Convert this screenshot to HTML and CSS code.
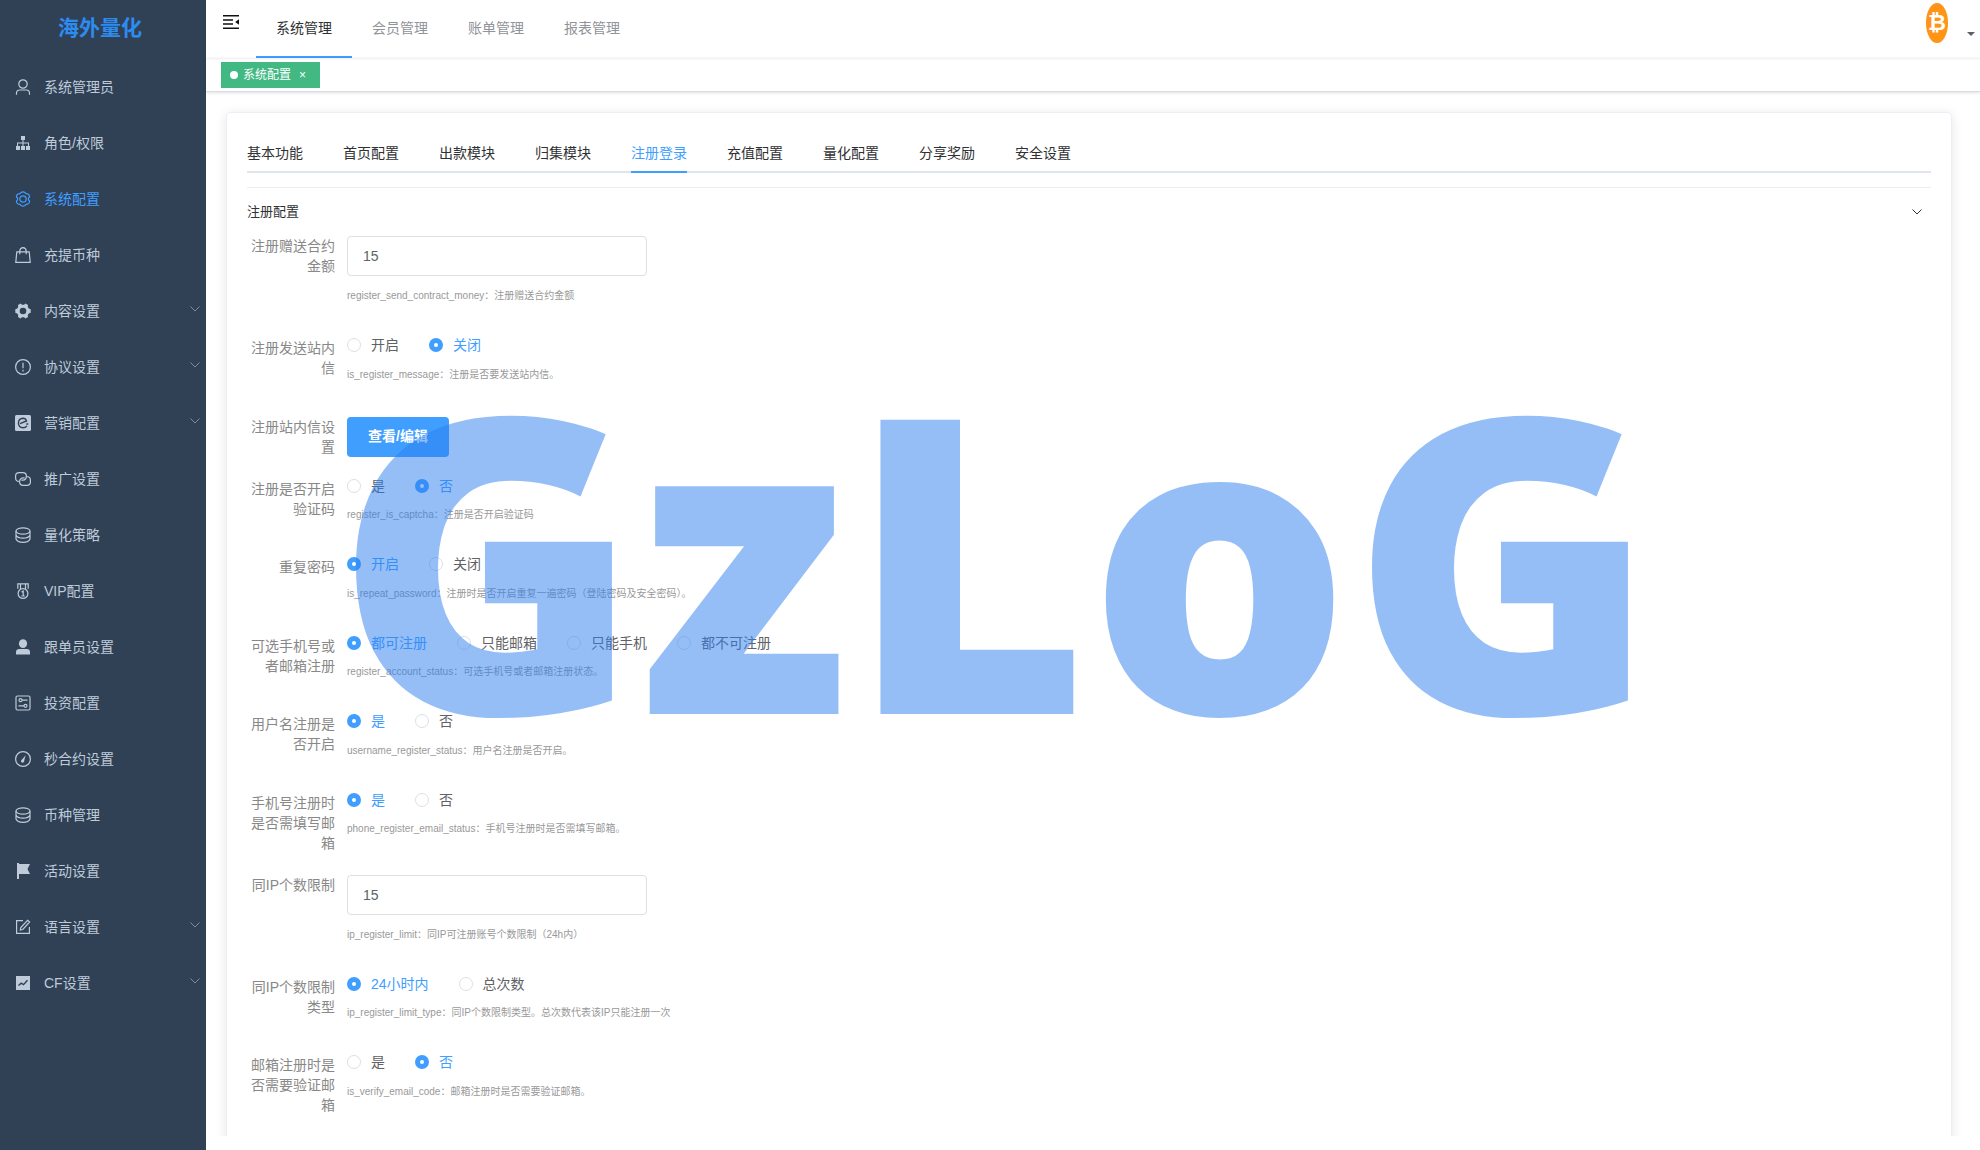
FILE: index.html
```html
<!DOCTYPE html>
<html lang="zh-CN">
<head>
  <meta charset="UTF-8">
  <meta name="viewport" content="width=device-width, initial-scale=1.0">
  <title>海外量化</title>
  <link rel="stylesheet" href="styles.css">
</head>
<body>

<div class="app">

  <!-- Sidebar -->
  <aside class="sidebar">
    <h1 class="logo">海外量化</h1>
    <nav class="menu">
      <a href="#" class="menu-item">
        <svg class="icon" viewBox="0 0 16 16"><circle cx="8" cy="5" r="4.2"/><path d="M1.5 15.8v-1.600q0-3.200 3.200-3.200h6.600q3.200 0 3.200 3.200v1.600"/></svg>
        <span>系统管理员</span>
      </a>
      <a href="#" class="menu-item">
        <svg class="icon fill" viewBox="0 0 16 16"><path d="M6 1h4v4H8.500v2.500H14V11h1v4h-4v-4h2V8.500H8.500V11H10v4H6v-4h1.500V8.500H3V11h2v4H1v-4h1V7.500h5.500V5H6z"/></svg>
        <span>角色/权限</span>
      </a>
      <a href="#" class="menu-item active">
        <svg class="icon" viewBox="0 0 16 16"><path d="M6 1.500Q8 .2 10 1.500q.7 1.600 2.600 1.300 2 .8 2 3-1.300 1.200-1.300 2.200t1.300 2.200q0 2.200-2 3-1.900-.3-2.600 1.300-2 1.300-4 0-.7-1.600-2.600-1.300-2-.8-2-3Q2.700 9 2.700 8T1.400 5.800q0-2.200 2-3 1.900.3 2.600-1.300z"/><circle cx="8" cy="8" r="3.200"/></svg>
        <span>系统配置</span>
      </a>
      <a href="#" class="menu-item">
        <svg class="icon" viewBox="0 0 16 16"><path d="M1.800 4.800h12.400l1 10.500H.8zM4.800 7.200V4Q5 1 8 .7q3 .3 3.200 3.300v3.200"/></svg>
        <span>充提币种</span>
      </a>
      <a href="#" class="menu-item">
        <svg class="icon fill" viewBox="0 0 16 16"><path fill-rule="evenodd" d="M5.500.5 7 1.700h2L10.500.5l2.500 1.500-.2 2 1 1.600 1.900.7v3.400l-1.900.7-1 1.600.2 2-2.500 1.500L9 14.300H7l-1.500 1.200L3 14l.2-2-1-1.600-1.900-.7V6.300l1.900-.7 1-1.600L3 2zM8 4.700a3.300 3.300 0 1 0 0 6.600 3.300 3.300 0 0 0 0-6.600z"/></svg>
        <span>内容设置</span>
        <svg class="arrow" viewBox="0 0 10 6"><path d="M.5.5 5 5 9.500.5"/></svg>
      </a>
      <a href="#" class="menu-item">
        <svg class="icon" viewBox="0 0 16 16"><circle cx="8" cy="8" r="7.400"/><path d="M8 3.800v5.500M8 10.800v1.600"/></svg>
        <span>协议设置</span>
        <svg class="arrow" viewBox="0 0 10 6"><path d="M.5.5 5 5 9.500.5"/></svg>
      </a>
      <a href="#" class="menu-item">
        <svg class="icon" viewBox="0 0 16 16"><rect class="solid" width="16" height="16" rx="1.500"/><path class="cut" d="M5 8.700 11.500 6Q10.600 3.300 8 3.300 3.600 3.600 3.400 8q.2 4.600 4.600 4.800 2.500 0 4-1.900M11.300 9h2"/></svg>
        <span>营销配置</span>
        <svg class="arrow" viewBox="0 0 10 6"><path d="M.5.5 5 5 9.500.5"/></svg>
      </a>
      <a href="#" class="menu-item">
        <svg class="icon" viewBox="0 0 16 16"><path d="M4.500 10.500Q.6 10.500.6 7V5Q.6 1.600 4.200 1.600h3.600q3.600 0 3.600 3.600T8 9.200H6.300M11.500 5.500q3.900 0 3.900 3.500v2q0 3.400-3.600 3.400H8.200q-3.600 0-3.600-3.600T8 6.800h1.700"/></svg>
        <span>推广设置</span>
      </a>
      <a href="#" class="menu-item">
        <svg class="icon" viewBox="0 0 16 16"><ellipse cx="8" cy="4" rx="7" ry="3.200"/><path d="M1 4v8q1.200 3.300 7 3.300t7-3.300V4M1 8q1.200 3.200 7 3.200T15 8"/></svg>
        <span>量化策略</span>
      </a>
      <a href="#" class="menu-item">
        <svg class="icon" viewBox="0 0 16 16"><circle cx="8" cy="10.500" r="4.900"/><path d="M2.800 5.800V.8h10.400v5M5.500 1v5M10.500 1v5M6.500 9 8.200 8v5M6.400 13h3.400"/></svg>
        <span>VIP配置</span>
      </a>
      <a href="#" class="menu-item">
        <svg class="icon fill" viewBox="0 0 16 16"><ellipse cx="8" cy="4.600" rx="4.100" ry="4.400"/><path d="M1 15.500V13q0-3 3.500-3h7q3.500 0 3.500 3v2.500z"/></svg>
        <span>跟单员设置</span>
      </a>
      <a href="#" class="menu-item">
        <svg class="icon" viewBox="0 0 16 16"><rect x="1" y="1" width="14" height="14" rx="1.500"/><circle cx="5.500" cy="5.200" r="1.500"/><circle cx="10.500" cy="10.800" r="1.500"/><path d="M7 5.200h5.500M3.500 10.800H9"/></svg>
        <span>投资配置</span>
      </a>
      <a href="#" class="menu-item">
        <svg class="icon" viewBox="0 0 16 16"><circle cx="8" cy="8" r="7.400"/><path class="solid" d="M10.700 4.200 9.200 9.600A1.600 1.600 0 1 1 7 8.600z"/></svg>
        <span>秒合约设置</span>
      </a>
      <a href="#" class="menu-item">
        <svg class="icon" viewBox="0 0 16 16"><ellipse cx="8" cy="4" rx="7" ry="3.200"/><path d="M1 4v8q1.200 3.300 7 3.300t7-3.300V4M1 8q1.200 3.200 7 3.200T15 8"/></svg>
        <span>币种管理</span>
      </a>
      <a href="#" class="menu-item">
        <svg class="icon fill" viewBox="0 0 16 16"><path d="M2 0h2v1h11l-2.500 5L15 11H4v5H2z"/></svg>
        <span>活动设置</span>
      </a>
      <a href="#" class="menu-item">
        <svg class="icon" viewBox="0 0 16 16"><path d="M8 1.700H1.600v12.700h12.800V8M12.600 1.300l2 1.700-6.800 7.500-2.500.5.500-2.500z"/></svg>
        <span>语言设置</span>
        <svg class="arrow" viewBox="0 0 10 6"><path d="M.5.5 5 5 9.500.5"/></svg>
      </a>
      <a href="#" class="menu-item">
        <svg class="icon" viewBox="0 0 16 16"><rect class="solid" x="1" y="1" width="14" height="14"/><path class="cut" d="m3.500 10.500 2.700-2.300 2.300 1.500 4-4.500"/></svg>
        <span>CF设置</span>
        <svg class="arrow" viewBox="0 0 10 6"><path d="M.5.5 5 5 9.500.5"/></svg>
      </a>
    </nav>
  </aside>

  <!-- Main -->
  <div class="main">
    <header class="navbar">
      <button class="hamburger" aria-label="菜单">
        <svg viewBox="0 0 16 14"><path class="bars" d="M0 .8h16M0 4.900h10M0 9h10M0 13.200h16"/><path d="m12.200 7 3.800-2.700v5.400z"/></svg>
      </button>
      <nav class="top-menu">
        <a href="#" class="active">系统管理</a>
        <a href="#">会员管理</a>
        <a href="#">账单管理</a>
        <a href="#">报表管理</a>
      </nav>
      <button class="user">
        <span class="avatar">₿</span>
        <span class="caret"></span>
      </button>
    </header>

    <div class="tags-view">
      <a href="#" class="tag">系统配置<span class="tag-close">×</span></a>
    </div>

    <main class="content">
      <section class="card">
        <nav class="tabs">
          <a href="#">基本功能</a>
          <a href="#">首页配置</a>
          <a href="#">出款模块</a>
          <a href="#">归集模块</a>
          <a href="#" class="active">注册登录</a>
          <a href="#">充值配置</a>
          <a href="#">量化配置</a>
          <a href="#">分享奖励</a>
          <a href="#">安全设置</a>
        </nav>

        <button class="collapse-header">
          <span>注册配置</span>
          <svg viewBox="0 0 10 6"><path d="M.5.5 5 5 9.500.5"/></svg>
        </button>

        <form class="form">
          <div class="form-item">
            <label class="label" for="sendMoney">注册赠送合约金额</label>
            <div>
              <input class="text-input" type="text" id="sendMoney" value="15">
              <p class="tip">register_send_contract_money：注册赠送合约金额</p>
            </div>
          </div>

          <div class="form-item" role="radiogroup" aria-labelledby="l-message">
            <span class="label" id="l-message">注册发送站内信</span>
            <div>
              <div class="radios">
                <label><input type="radio" name="message"><span>开启</span></label>
                <label><input type="radio" name="message" checked><span>关闭</span></label>
              </div>
              <p class="tip">is_register_message：注册是否要发送站内信。</p>
            </div>
          </div>

          <div class="form-item">
            <label class="label" for="editMessage">注册站内信设置</label>
            <div>
              <button type="button" class="btn" id="editMessage">查看/编辑</button>
            </div>
          </div>

          <div class="form-item" role="radiogroup" aria-labelledby="l-captcha">
            <span class="label" id="l-captcha">注册是否开启验证码</span>
            <div>
              <div class="radios">
                <label><input type="radio" name="captcha"><span>是</span></label>
                <label><input type="radio" name="captcha" checked><span>否</span></label>
              </div>
              <p class="tip">register_is_captcha：注册是否开启验证码</p>
            </div>
          </div>

          <div class="form-item" role="radiogroup" aria-labelledby="l-repeat">
            <span class="label" id="l-repeat">重复密码</span>
            <div>
              <div class="radios">
                <label><input type="radio" name="repeat" checked><span>开启</span></label>
                <label><input type="radio" name="repeat"><span>关闭</span></label>
              </div>
              <p class="tip">is_repeat_password：注册时是否开启重复一遍密码（登陆密码及安全密码）。</p>
            </div>
          </div>

          <div class="form-item" role="radiogroup" aria-labelledby="l-account">
            <span class="label" id="l-account">可选手机号或者邮箱注册</span>
            <div>
              <div class="radios">
                <label><input type="radio" name="account" checked><span>都可注册</span></label>
                <label><input type="radio" name="account"><span>只能邮箱</span></label>
                <label><input type="radio" name="account"><span>只能手机</span></label>
                <label><input type="radio" name="account"><span>都不可注册</span></label>
              </div>
              <p class="tip">register_account_status：可选手机号或者邮箱注册状态。</p>
            </div>
          </div>

          <div class="form-item" role="radiogroup" aria-labelledby="l-username">
            <span class="label" id="l-username">用户名注册是否开启</span>
            <div>
              <div class="radios">
                <label><input type="radio" name="username" checked><span>是</span></label>
                <label><input type="radio" name="username"><span>否</span></label>
              </div>
              <p class="tip">username_register_status：用户名注册是否开启。</p>
            </div>
          </div>

          <div class="form-item" role="radiogroup" aria-labelledby="l-phone">
            <span class="label" id="l-phone">手机号注册时是否需填写邮箱</span>
            <div>
              <div class="radios">
                <label><input type="radio" name="phone" checked><span>是</span></label>
                <label><input type="radio" name="phone"><span>否</span></label>
              </div>
              <p class="tip">phone_register_email_status：手机号注册时是否需填写邮箱。</p>
            </div>
          </div>

          <div class="form-item">
            <label class="label" for="ipLimit">同IP个数限制</label>
            <div>
              <input class="text-input" type="text" id="ipLimit" value="15">
              <p class="tip">ip_register_limit：同IP可注册账号个数限制（24h内）</p>
            </div>
          </div>

          <div class="form-item" role="radiogroup" aria-labelledby="l-iptype">
            <span class="label" id="l-iptype">同IP个数限制类型</span>
            <div>
              <div class="radios">
                <label><input type="radio" name="iptype" checked><span>24小时内</span></label>
                <label><input type="radio" name="iptype"><span>总次数</span></label>
              </div>
              <p class="tip">ip_register_limit_type：同IP个数限制类型。总次数代表该IP只能注册一次</p>
            </div>
          </div>

          <div class="form-item" role="radiogroup" aria-labelledby="l-email">
            <span class="label" id="l-email">邮箱注册时是否需要验证邮箱</span>
            <div>
              <div class="radios">
                <label><input type="radio" name="email"><span>是</span></label>
                <label><input type="radio" name="email" checked><span>否</span></label>
              </div>
              <p class="tip">is_verify_email_code：邮箱注册时是否需要验证邮箱。</p>
            </div>
          </div>
        </form>
      </section>
    </main>
  </div>
</div>

<!-- Watermark -->
<div class="watermark">GzLoG</div>

</body>
</html>
```
FILE: styles.css
```css
/* Global */
* {
  box-sizing: border-box;
}

body {
  margin: 0;
  font-family: "Liberation Sans", "Noto Sans CJK SC", sans-serif;
  font-size: 14px;
  line-height: 1.15;
  color: #303133;
  background: #fff;
  overflow: hidden;
}

a {
  color: inherit;
  text-decoration: none;
}

button,
input {
  font-family: inherit;
  font-size: inherit;
  line-height: inherit;
}

button {
  border: none;
  background: none;
  padding: 0;
  cursor: pointer;
}

svg {
  fill: none;
  stroke: currentColor;
}

.app {
  display: flex;
  height: 100vh;
}

/* Sidebar */
.sidebar {
  width: 206px;
  flex-shrink: 0;
  background: #304156;
  overflow: hidden;
}

.logo {
  margin: 0;
  padding: 0 6px 3px 0;
  font-size: 21px;
  line-height: 56px;
  text-align: center;
  color: #2d8cf0;
}

.menu-item {
  display: flex;
  align-items: center;
  gap: 13px;
  height: 56px;
  padding: 0 6px 0 15px;
  color: #bfcbd9;
}

.menu-item.active {
  color: #409eff;
}

.icon {
  width: 16px;
  height: 16px;
  stroke-width: 1.2;
}

.icon.fill,
.icon .solid {
  fill: currentColor;
  stroke: none;
}

.icon .cut {
  stroke: #304156;
  stroke-width: 1.4;
}

.arrow {
  width: 10px;
  height: 6px;
  margin-left: auto;
  margin-bottom: 5px;
  color: #808b98;
}

/* Navbar */
.main {
  flex: 1;
  min-width: 0;
  display: flex;
  flex-direction: column;
  padding-bottom: 14px;
}

.navbar {
  display: flex;
  align-items: flex-start;
  height: 58px;
  flex-shrink: 0;
  padding: 0 5px 0 17px;
  box-shadow: 0 1px 2px rgba(0, 21, 41, 0.08);
}

.hamburger {
  margin: 15px 17px 0 0;
}

.hamburger svg {
  display: block;
  width: 16px;
  height: 14px;
  fill: #111;
  stroke: none;
}

.hamburger .bars {
  stroke: #111;
  stroke-width: 1.5;
}

.top-menu {
  display: flex;
}

.top-menu a {
  height: 58px;
  padding: 0 20px;
  line-height: 56px;
  color: #909399;
}

.top-menu a.active {
  color: #303133;
  border-bottom: 2px solid #409eff;
}

.user {
  display: flex;
  align-items: center;
  gap: 19px;
  margin: 3px 0 0 auto;
}

.avatar {
  width: 22px;
  height: 40px;
  border-radius: 50%;
  background: #ff9416;
  color: #fff;
  font: bold 22px/40px "DejaVu Sans Condensed", "DejaVu Sans", sans-serif;
  text-align: center;
}

.caret {
  margin-top: 26px;
  border: 4px solid transparent;
  border-top-color: #5a5e66;
}

/* Tags */
.tags-view {
  height: 34px;
  flex-shrink: 0;
  padding: 4px 15px;
  border-bottom: 1px solid #d8dce5;
  box-shadow: 0 1px 3px rgba(0, 0, 0, 0.12);
}

.tag {
  display: inline-flex;
  align-items: center;
  height: 26px;
  padding: 0 14px 0 9px;
  background: #42b983;
  color: #fff;
  font-size: 12px;
  line-height: 16px;
}

.tag::before {
  content: "";
  width: 8px;
  height: 8px;
  margin-right: 5px;
  border-radius: 50%;
  background: #fff;
}

.tag-close {
  margin-left: 8px;
}

/* Content */
.content {
  flex: 1;
  min-height: 0;
  padding: 20px 28px 0 20px;
  overflow: hidden;
}

.card {
  padding: 20px;
  border: 1px solid #ebeef5;
  border-radius: 4px;
  box-shadow: 0 2px 12px rgba(0, 0, 0, 0.1);
}

.tabs {
  display: flex;
  gap: 40px;
  margin-bottom: 14px;
  box-shadow: inset 0 -2px #dfe4ed;
}

.tabs a {
  height: 40px;
  line-height: 40px;
}

.tabs a.active {
  color: #409eff;
  border-bottom: 2px solid #409eff;
}

.collapse-header {
  display: flex;
  align-items: center;
  justify-content: space-between;
  width: 100%;
  height: 49px;
  padding-right: 9px;
  border-top: 1px solid #ebeef5;
  font-size: 13px;
  color: #303133;
}

.collapse-header svg {
  width: 10px;
  height: 6px;
}

/* Form */
.form-item {
  display: flex;
  align-items: flex-start;
  margin-bottom: 22px;
}

.label {
  width: 100px;
  padding-right: 12px;
  line-height: 20px;
  text-align: right;
  color: #888;
}

.text-input {
  display: block;
  width: 300px;
  height: 40px;
  padding: 0 15px;
  border: 1px solid #dcdfe6;
  border-radius: 4px;
  color: #606266;
}

.radios {
  display: flex;
  gap: 30px;
  height: 1.18em;
  line-height: 1;
  color: #606266;
}

.radios label {
  display: flex;
  gap: 10px;
  cursor: pointer;
}

.radios input {
  appearance: none;
  width: 14px;
  height: 14px;
  margin: 0;
  border: 1px solid #dcdfe6;
  border-radius: 50%;
  background: #fff;
}

.radios input:checked {
  border: 5px solid #409eff;
}

.radios input:checked + span {
  color: #409eff;
}

.tip {
  margin: 0;
  font-size: 10px;
  line-height: 40px;
  color: #999;
}

.btn {
  display: block;
  height: 40px;
  padding: 0 21px;
  border-radius: 4px;
  background: #409eff;
  color: #fff;
  font-weight: bold;
}

/* Watermark */
.watermark {
  position: fixed;
  top: 409px;
  left: 335px;
  font-family: "Noto Sans", sans-serif;
  font-weight: 900;
  font-size: 412px;
  line-height: 291px;
  color: rgba(44, 125, 239, 0.5);
  pointer-events: none;
}
```
